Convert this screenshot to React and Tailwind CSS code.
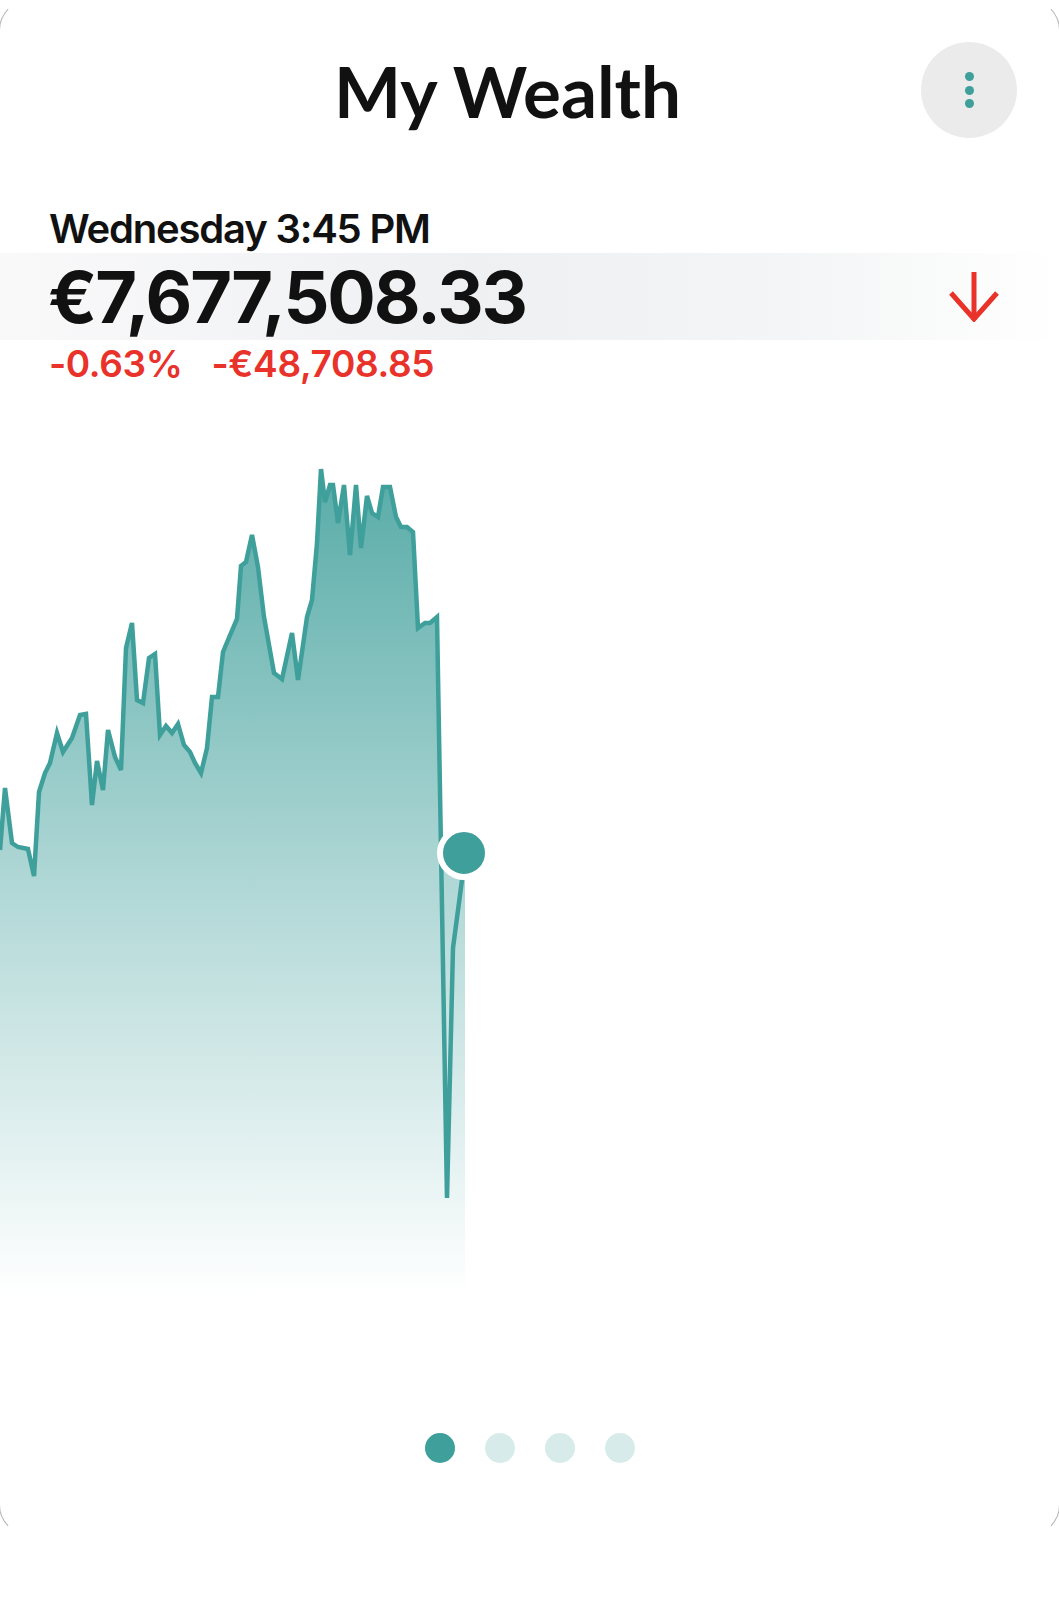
import React from 'react';

const TEAL = '#3f9f9b';

// chart points in page coordinates (x, y)
const points = [
  [0, 850], [5, 788], [12, 843], [18, 847], [28, 849], [34, 876], [39, 792], [45, 773], [50, 763],
  [57, 733], [63, 752], [72, 738], [80, 715], [86, 714], [92, 805], [97, 761], [103, 790], [108, 730],
  [115, 757], [121, 770], [126, 648], [132, 623], [137, 700], [143, 703], [149, 658], [155, 654],
  [160, 735], [166, 726], [172, 733], [178, 724], [184, 745], [190, 752], [195, 763], [201, 773],
  [207, 748], [212, 697], [218, 697], [223, 652], [228, 640], [237, 619], [241, 566], [246, 562],
  [252, 535], [258, 567], [264, 617], [274, 673], [282, 679], [292, 633], [298, 680], [307, 617],
  [312, 600], [317, 543], [321, 469], [325, 502], [330, 485], [333, 485], [338, 523], [344, 485],
  [350, 555], [356, 485], [361, 548], [367, 496], [372, 513], [378, 517], [383, 487], [390, 487],
  [396, 517], [401, 527], [407, 527], [413, 532], [418, 628], [425, 623], [430, 623], [437, 617],
  [447, 1198], [453, 948], [462, 880],
];

function WealthChart() {
  const line = points.map(([x, y], i) => `${i ? 'L' : 'M'}${x} ${y}`).join(' ');
  const upTo = points.slice(0, points.findIndex(p => p[0] === 437) + 1);
  const area =
    upTo.map(([x, y], i) => `${i ? 'L' : 'M'}${x} ${y}`).join(' ') +
    ' L442 853 L465 853 L465 1300 L0 1300 Z';

  return (
    <svg className="block" width="1059" height="1000" viewBox="0 382 1059 1000">
      <defs>
        <linearGradient id="areaFill" gradientUnits="userSpaceOnUse" x1="0" y1="460" x2="0" y2="1295">
          <stop offset="0" stopColor={TEAL} stopOpacity="0.88" />
          <stop offset="0.5" stopColor={TEAL} stopOpacity="0.42" />
          <stop offset="1" stopColor={TEAL} stopOpacity="0" />
        </linearGradient>
      </defs>
      <path d={area} fill="url(#areaFill)" />
      <path d={line} fill="none" stroke={TEAL} strokeWidth="4.5" strokeLinejoin="miter" strokeMiterlimit="4" />
      <circle cx="464" cy="853" r="24" fill={TEAL} stroke="#fff" strokeWidth="6" />
    </svg>
  );
}

export default function App() {
  return (
    <div className="w-[1059px] h-[1608px] bg-white overflow-hidden">
      <div className="-mx-px h-[1535px] rounded-[30px] border border-x-[#b8b8b8] border-y-white bg-white overflow-hidden">
        {/* header */}
        <div className="flex items-center pt-[41px]">
          <div className="flex-1 pl-[94px] text-center">
            <h1 className="text-[71px] leading-none font-bold text-[#111]" style={{ fontFamily: 'Lato, sans-serif' }}>
              My Wealth
            </h1>
          </div>
          <button className="mr-[42px] w-[96px] h-[96px] rounded-full bg-[#ebebeb] flex flex-col items-center justify-center gap-[4.5px]">
            <span className="w-[9px] h-[9px] rounded-full bg-[#3f9f9b]" />
            <span className="w-[9px] h-[9px] rounded-full bg-[#3f9f9b]" />
            <span className="w-[9px] h-[9px] rounded-full bg-[#3f9f9b]" />
          </button>
        </div>

        {/* value block */}
        <div style={{ fontFamily: 'Inter, sans-serif' }}>
          <p className="mt-[71px] px-[49px] text-[40px] leading-[40px] font-semibold tracking-[-0.03em] text-[#111]">
            Wednesday 3:45 PM
          </p>
          <div className="mt-[4px] h-[87px] flex items-start justify-between pl-[48px] pr-[60px] bg-[linear-gradient(to_right,#f9f9fa_0%,#eff0f2_45%,#f4f5f6_75%,#ffffff_100%)]">
            <span className="mt-[8px] text-[72px] leading-[72px] font-bold tracking-[-0.03em] text-[#111]">
              €7,677,508.33
            </span>
            <svg className="mt-[19px]" width="50" height="50" viewBox="0 0 50 50" fill="none" stroke="#e8322a" strokeWidth="5">
              <path d="M25 0 V48" />
              <path d="M2 21 L25 47 L48 21" />
            </svg>
          </div>
          <div className="mt-[5px] px-[49px] flex gap-[29px] text-[37px] leading-[37px] font-semibold tracking-[-0.01em] text-[#e8322a]">
            <span>-0.63%</span>
            <span>-€48,708.85</span>
          </div>
        </div>

        <WealthChart />

        {/* pager */}
        <div className="mt-[51px] flex justify-center gap-[30px]">
          <span className="w-[30px] h-[30px] rounded-full bg-[#3f9f9b]" />
          <span className="w-[30px] h-[30px] rounded-full bg-[#d7ecea]" />
          <span className="w-[30px] h-[30px] rounded-full bg-[#d7ecea]" />
          <span className="w-[30px] h-[30px] rounded-full bg-[#d7ecea]" />
        </div>
      </div>
    </div>
  );
}
